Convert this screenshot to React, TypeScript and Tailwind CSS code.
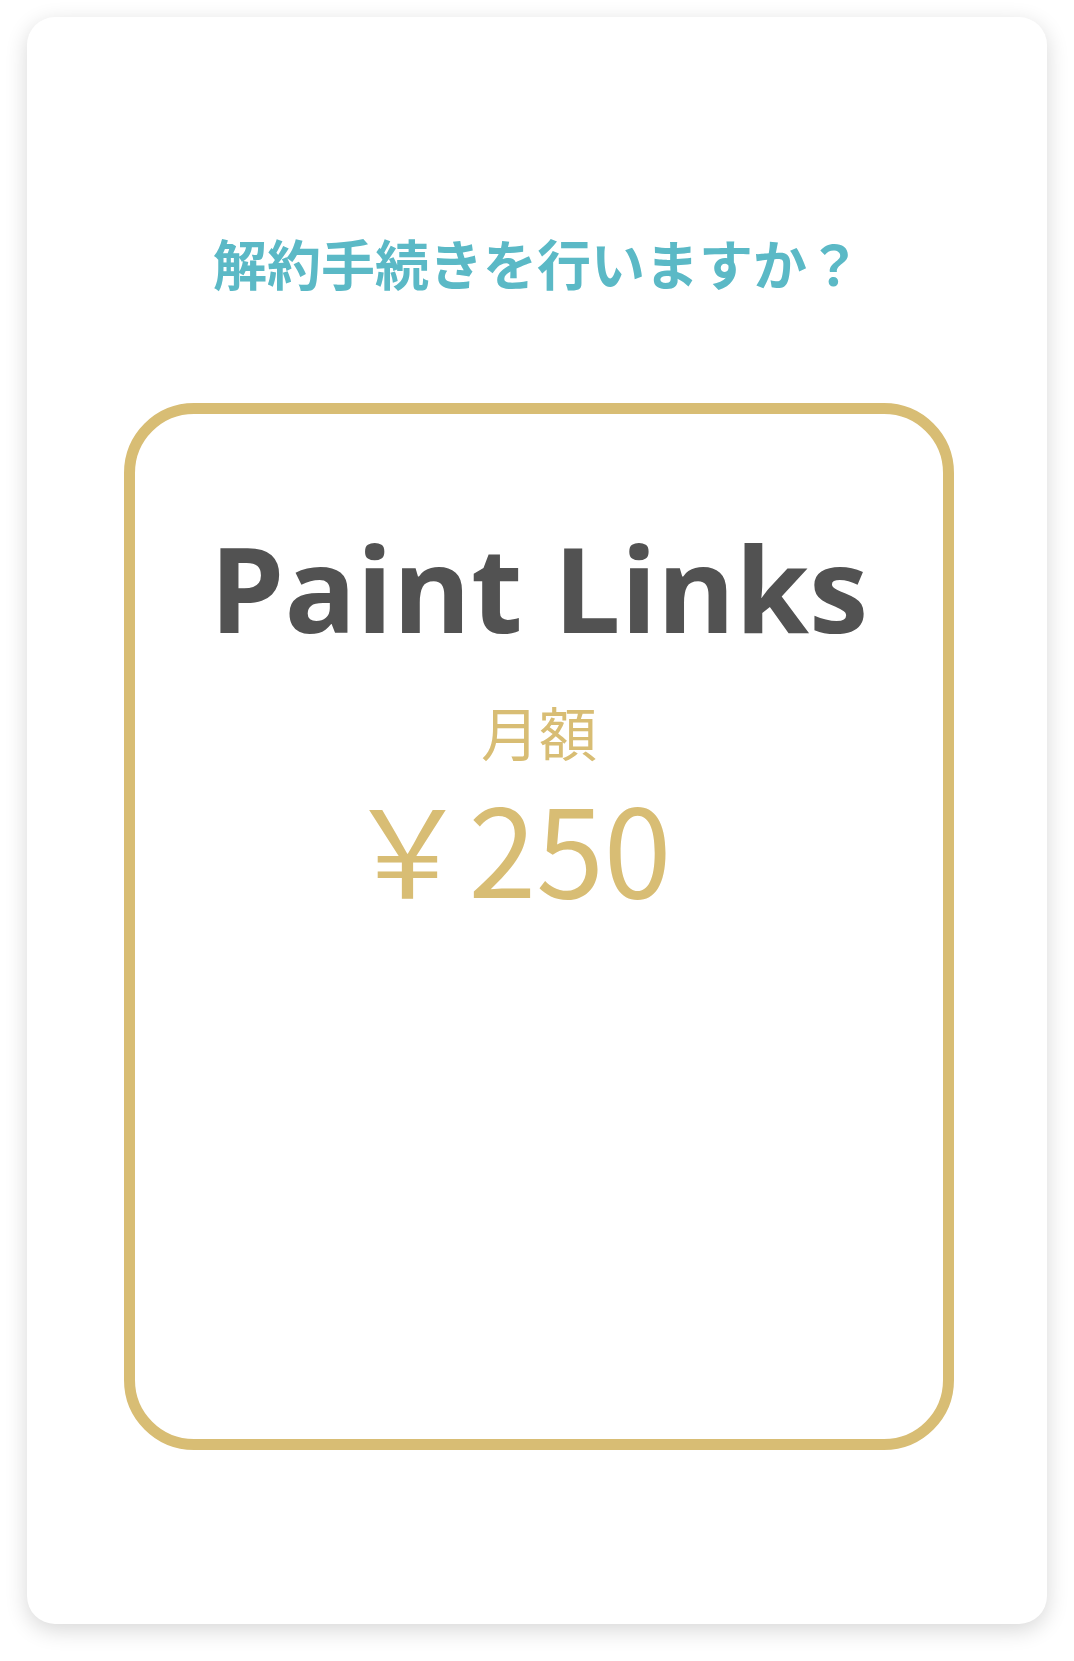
import React from 'react';

const GOLD = 'text-[#d8bd74]';
const JP = "font-['Noto_Sans_CJK_JP',sans-serif]";

const App: React.FC = () => {
  return (
    <div className="min-h-[1661px] bg-white pt-[17px] pl-[27px]">
      <div className="w-[1020px] h-[1607px] rounded-[28px] bg-white shadow-[0_6px_22px_rgba(0,0,0,0.16)] flex flex-col items-center">
        {/* Question */}
        <h1 className={`mt-[219px] text-[54px] leading-none font-bold text-[#5bb9c6] ${JP}`}>
          解約手続きを行いますか？
        </h1>

        {/* Plan frame */}
        <div className="mt-[113px] ml-[4px] w-[830px] h-[1047px] rounded-[70px] border-[11px] border-[#d8bd74] flex flex-col items-center">
          <p className="mt-[114px] text-[119px] leading-none font-bold text-[#525252] font-['Open_Sans',sans-serif]">
            Paint Links
          </p>
          <p className={`mt-[55px] text-[58px] leading-none font-normal ${GOLD} ${JP}`}>
            月額
          </p>
          <p className={`mt-[24px] mr-[60px] text-[122px] leading-none font-normal ${GOLD} ${JP}`}>
            ￥250
          </p>
        </div>
      </div>
    </div>
  );
};

export default App;
